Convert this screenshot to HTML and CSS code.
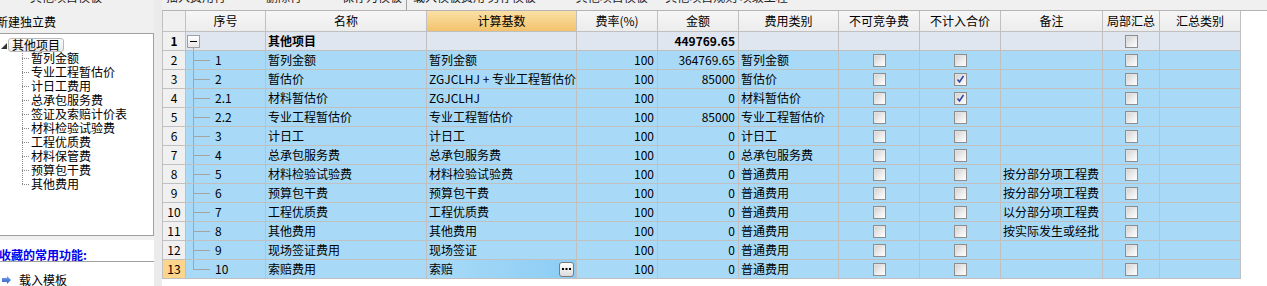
FILE: index.html
```html
<!DOCTYPE html>
<html lang="zh-CN">
<head>
<meta charset="utf-8">
<title>其他项目</title>
<link rel="stylesheet" href="styles.css">
</head>
<body>
<div class="app">
  <aside class="side">
    <div class="side-top"><span class="clip">其他项目模板</span></div>
    <div class="side-title"><span>新建独立费</span></div>
    <div class="tree-box">
      <div class="tree-root">
        <svg class="tri" width="6" height="6" viewBox="0 0 6 6"><polygon points="6,0 6,6 0,6" fill="#333"/></svg>
        <span class="root-label">其他项目</span>
      </div>
      <ul class="tree-children">
        <li><span class="dash"></span>暂列金额</li>
        <li><span class="dash"></span>专业工程暂估价</li>
        <li><span class="dash"></span>计日工费用</li>
        <li><span class="dash"></span>总承包服务费</li>
        <li><span class="dash"></span>签证及索赔计价表</li>
        <li><span class="dash"></span>材料检验试验费</li>
        <li><span class="dash"></span>工程优质费</li>
        <li><span class="dash"></span>材料保管费</li>
        <li><span class="dash"></span>预算包干费</li>
        <li class="last"><span class="dash"></span>其他费用</li>
      </ul>
    </div>
    <div class="fav">
      <div class="fav-title">收藏的常用功能:</div>
      <div class="fav-item">
        <svg class="arrow" width="10" height="8" viewBox="0 0 10 8"><defs><linearGradient id="ag" x1="0" y1="0" x2="0" y2="1"><stop offset="0" stop-color="#7aa6ee"/><stop offset="1" stop-color="#2c5cc4"/></linearGradient></defs><polygon points="0,2 5,2 5,0 9,4 5,8 5,6 0,6" fill="url(#ag)"/></svg>
        <span>载入模板</span>
      </div>
    </div>
  </aside>
  <div class="splitter"></div>
  <main class="main">
    <div class="toolbar">
      <span class="tb tb-a">插入费用行</span>
      <span class="tb tb-b">删除行</span>
      <span class="tb tb-c">保存为模板</span>
      <span class="sep"></span>
      <span class="tb tb-d">载入模板费用 另存模板</span>
      <span class="tb tb-e">其他项目模板 · 其他项目规则 项级工程</span>
    </div>
    <div class="grid-wrap">
      <div class="grid">
        <div class="row head">
          <div class="c rn"></div>
          <div class="c hc">序号</div>
          <div class="c hc">名称</div>
          <div class="c hc sel">计算基数</div>
          <div class="c hc">费率(%)</div>
          <div class="c hc">金额</div>
          <div class="c hc">费用类别</div>
          <div class="c hc">不可竞争费</div>
          <div class="c hc">不计入合价</div>
          <div class="c hc">备注</div>
          <div class="c hc">局部汇总</div>
          <div class="c hc">汇总类别</div>
        </div>

        <div class="row top">
          <div class="c rn b">1</div>
          <div class="c tr0"><span class="exp"><span class="minus"></span></span></div>
          <div class="c l b">其他项目</div>
          <div class="c l"></div>
          <div class="c r"></div>
          <div class="c r b">449769.65</div>
          <div class="c l"></div>
          <div class="c ctr"></div>
          <div class="c ctr"></div>
          <div class="c l"></div>
          <div class="c ctr"><span class="cb"></span></div>
          <div class="c l"></div>
        </div>

        <div class="row">
          <div class="c rn">2</div>
          <div class="c tr">1</div>
          <div class="c l">暂列金额</div>
          <div class="c l">暂列金额</div>
          <div class="c r">100</div>
          <div class="c r">364769.65</div>
          <div class="c l">暂列金额</div>
          <div class="c ctr"><span class="cb"></span></div>
          <div class="c ctr"><span class="cb"></span></div>
          <div class="c l"></div>
          <div class="c ctr"><span class="cb"></span></div>
          <div class="c l"></div>
        </div>

        <div class="row">
          <div class="c rn">3</div>
          <div class="c tr">2</div>
          <div class="c l">暂估价</div>
          <div class="c l">ZGJCLHJ + 专业工程暂估价</div>
          <div class="c r">100</div>
          <div class="c r">85000</div>
          <div class="c l">暂估价</div>
          <div class="c ctr"><span class="cb"></span></div>
          <div class="c ctr"><span class="cb on"><svg width="9" height="9" viewBox="0 0 9 9"><path d="M1.5 4.5 L3.5 7 L7.5 1" fill="none" stroke="#3348a8" stroke-width="1.6"/></svg></span></div>
          <div class="c l"></div>
          <div class="c ctr"><span class="cb"></span></div>
          <div class="c l"></div>
        </div>

        <div class="row">
          <div class="c rn">4</div>
          <div class="c tr">2.1</div>
          <div class="c l">材料暂估价</div>
          <div class="c l">ZGJCLHJ</div>
          <div class="c r">100</div>
          <div class="c r">0</div>
          <div class="c l">材料暂估价</div>
          <div class="c ctr"><span class="cb"></span></div>
          <div class="c ctr"><span class="cb on"><svg width="9" height="9" viewBox="0 0 9 9"><path d="M1.5 4.5 L3.5 7 L7.5 1" fill="none" stroke="#3348a8" stroke-width="1.6"/></svg></span></div>
          <div class="c l"></div>
          <div class="c ctr"><span class="cb"></span></div>
          <div class="c l"></div>
        </div>

        <div class="row">
          <div class="c rn">5</div>
          <div class="c tr">2.2</div>
          <div class="c l">专业工程暂估价</div>
          <div class="c l">专业工程暂估价</div>
          <div class="c r">100</div>
          <div class="c r">85000</div>
          <div class="c l">专业工程暂估价</div>
          <div class="c ctr"><span class="cb"></span></div>
          <div class="c ctr"><span class="cb"></span></div>
          <div class="c l"></div>
          <div class="c ctr"><span class="cb"></span></div>
          <div class="c l"></div>
        </div>

        <div class="row">
          <div class="c rn">6</div>
          <div class="c tr">3</div>
          <div class="c l">计日工</div>
          <div class="c l">计日工</div>
          <div class="c r">100</div>
          <div class="c r">0</div>
          <div class="c l">计日工</div>
          <div class="c ctr"><span class="cb"></span></div>
          <div class="c ctr"><span class="cb"></span></div>
          <div class="c l"></div>
          <div class="c ctr"><span class="cb"></span></div>
          <div class="c l"></div>
        </div>

        <div class="row">
          <div class="c rn">7</div>
          <div class="c tr">4</div>
          <div class="c l">总承包服务费</div>
          <div class="c l">总承包服务费</div>
          <div class="c r">100</div>
          <div class="c r">0</div>
          <div class="c l">总承包服务费</div>
          <div class="c ctr"><span class="cb"></span></div>
          <div class="c ctr"><span class="cb"></span></div>
          <div class="c l"></div>
          <div class="c ctr"><span class="cb"></span></div>
          <div class="c l"></div>
        </div>

        <div class="row">
          <div class="c rn">8</div>
          <div class="c tr">5</div>
          <div class="c l">材料检验试验费</div>
          <div class="c l">材料检验试验费</div>
          <div class="c r">100</div>
          <div class="c r">0</div>
          <div class="c l">普通费用</div>
          <div class="c ctr"><span class="cb"></span></div>
          <div class="c ctr"><span class="cb"></span></div>
          <div class="c l">按分部分项工程费</div>
          <div class="c ctr"><span class="cb"></span></div>
          <div class="c l"></div>
        </div>

        <div class="row">
          <div class="c rn">9</div>
          <div class="c tr">6</div>
          <div class="c l">预算包干费</div>
          <div class="c l">预算包干费</div>
          <div class="c r">100</div>
          <div class="c r">0</div>
          <div class="c l">普通费用</div>
          <div class="c ctr"><span class="cb"></span></div>
          <div class="c ctr"><span class="cb"></span></div>
          <div class="c l">按分部分项工程费</div>
          <div class="c ctr"><span class="cb"></span></div>
          <div class="c l"></div>
        </div>

        <div class="row">
          <div class="c rn">10</div>
          <div class="c tr">7</div>
          <div class="c l">工程优质费</div>
          <div class="c l">工程优质费</div>
          <div class="c r">100</div>
          <div class="c r">0</div>
          <div class="c l">普通费用</div>
          <div class="c ctr"><span class="cb"></span></div>
          <div class="c ctr"><span class="cb"></span></div>
          <div class="c l">以分部分项工程费</div>
          <div class="c ctr"><span class="cb"></span></div>
          <div class="c l"></div>
        </div>

        <div class="row">
          <div class="c rn">11</div>
          <div class="c tr">8</div>
          <div class="c l">其他费用</div>
          <div class="c l">其他费用</div>
          <div class="c r">100</div>
          <div class="c r">0</div>
          <div class="c l">普通费用</div>
          <div class="c ctr"><span class="cb"></span></div>
          <div class="c ctr"><span class="cb"></span></div>
          <div class="c l">按实际发生或经批</div>
          <div class="c ctr"><span class="cb"></span></div>
          <div class="c l"></div>
        </div>

        <div class="row">
          <div class="c rn">12</div>
          <div class="c tr">9</div>
          <div class="c l">现场签证费用</div>
          <div class="c l">现场签证</div>
          <div class="c r">100</div>
          <div class="c r">0</div>
          <div class="c l">普通费用</div>
          <div class="c ctr"><span class="cb"></span></div>
          <div class="c ctr"><span class="cb"></span></div>
          <div class="c l"></div>
          <div class="c ctr"><span class="cb"></span></div>
          <div class="c l"></div>
        </div>

        <div class="row">
          <div class="c rn cur">13</div>
          <div class="c tr end">10</div>
          <div class="c l">索赔费用</div>
          <div class="c l edit"><span>索赔</span><span class="more"><svg width="9" height="3" viewBox="0 0 9 3"><rect x="0" y="0" width="2" height="2" fill="#000"/><rect x="3.5" y="0" width="2" height="2" fill="#000"/><rect x="7" y="0" width="2" height="2" fill="#000"/></svg></span></div>
          <div class="c r">100</div>
          <div class="c r">0</div>
          <div class="c l">普通费用</div>
          <div class="c ctr"><span class="cb"></span></div>
          <div class="c ctr"><span class="cb"></span></div>
          <div class="c l"></div>
          <div class="c ctr"><span class="cb"></span></div>
          <div class="c l"></div>
        </div>
      </div>
    </div>
  </main>
</div>
</body>
</html>
```

FILE: styles.css
```css
* { box-sizing: border-box; }

html, body {
  margin: 0;
  padding: 0;
}

body {
  width: 1267px;
  height: 286px;
  overflow: hidden;
  background: #f0f0f0;
  font-family: "Noto Sans CJK SC", "Noto Sans", sans-serif;
  font-size: 12px;
  color: #000;
}

.app {
  display: flex;
  height: 286px;
}

/* ---------- left panel ---------- */
.side {
  width: 154px;
  flex: none;
  display: flex;
  flex-direction: column;
  background: #f0f0f0;
}

.side-top {
  height: 10px;
  overflow: hidden;
  padding-left: 30px;
}

.clip {
  display: block;
  line-height: 12px;
  margin-top: -9px;
  color: #222;
}

.side-title {
  height: 23px;
  line-height: 23px;
  overflow: hidden;
  white-space: nowrap;
}

.side-title span {
  display: inline-block;
  margin-left: -4px;
}

.tree-box {
  height: 203px;
  margin-left: -1px;
  width: 155px;
  background: #fff;
  border: 1px solid #a0a0a0;
  padding-top: 4px;
}

.tree-root {
  display: flex;
  align-items: center;
  height: 13px;
}

.tri {
  margin-left: 1px;
  margin-top: 2px;
  flex: none;
}

.root-label {
  margin-left: 1px;
  height: 14px;
  line-height: 12px;
  padding: 0 3px;
  border: 1px solid #b8b8b8;
  border-radius: 3px;
  background: linear-gradient(#fbfbfb, #e9e9e9);
}

.tree-children {
  list-style: none;
  margin: 0 0 0 22px;
  padding: 0;
}

.tree-children li {
  height: 14px;
  line-height: 14px;
  display: flex;
  align-items: center;
  white-space: nowrap;
  background-image: linear-gradient(#888 50%, transparent 50%);
  background-size: 1px 2px;
  background-repeat: repeat-y;
  background-position: 0 0;
}

.tree-children li.last {
  background-image: linear-gradient(#fff, #fff), linear-gradient(#888 50%, transparent 50%);
  background-size: 1px 7px, 1px 2px;
  background-repeat: no-repeat, repeat-y;
  background-position: 0 100%, 0 0;
}

.dash {
  width: 7px;
  height: 1px;
  margin-right: 2px;
  flex: none;
  background: repeating-linear-gradient(to right, #888 0 1px, transparent 1px 2px);
}

.fav {
  margin-top: 4px;
  flex: 1;
  background: #fff;
}

.fav-title {
  height: 22px;
  padding-top: 8px;
  line-height: 13px;
  color: #0000ee;
  font-weight: bold;
  border-bottom: 1px solid #a0a0a0;
  white-space: nowrap;
  margin-left: -1px;
}

.fav-item {
  display: flex;
  align-items: center;
  height: 24px;
  padding-top: 12px;
  padding-left: 2px;
  line-height: 14px;
}

.arrow {
  flex: none;
  margin-right: 7px;
}

.splitter {
  width: 8px;
  flex: none;
  background: #ebebeb;
}

/* ---------- main ---------- */
.main {
  flex: 1;
  display: flex;
  flex-direction: column;
  min-width: 0;
}

.toolbar {
  height: 10px;
  overflow: hidden;
  display: flex;
  align-items: flex-start;
  background: #f0f0f0;
  white-space: nowrap;
}

.tb {
  display: block;
  line-height: 12px;
  margin-top: -9px;
  color: #222;
}

.tb-a { margin-left: 4px; }
.tb-b { margin-left: 40px; }
.tb-c { margin-left: 40px; }
.tb-d { margin-left: 6px; }
.tb-e { margin-left: 40px; }

.sep {
  width: 1px;
  height: 10px;
  margin-left: 4px;
  background: #a0a0a0;
}

.grid-wrap {
  flex: 1;
  background: #fff;
  border-top: 1px solid #b4b4b4;
}

.grid {
  width: 1079px;
  border-left: 1px solid #c0c0c0;
}

.row {
  display: grid;
  grid-template-columns: 23px 80px 161px 150px 81px 81px 100px 81px 81px 102px 57px 81px;
  height: 19px;
  background: #a8daf8;
}

.row.head {
  height: 21px;
  background: #f0f0f0;
}

.row.top {
  background: #dfe6f0;
}

.c {
  border-right: 1px solid #c0c0c0;
  border-bottom: 1px solid #c0c0c0;
  white-space: nowrap;
  overflow: hidden;
  display: flex;
  align-items: center;
  line-height: 18px;
}

.hc {
  justify-content: center;
  background: linear-gradient(#f6f6f6, #ececec);
}

.hc.sel {
  background: linear-gradient(#fbe0a6, #f2c36c);
}

.rn {
  justify-content: center;
  background: #f0f0f0;
}

.rn.cur {
  background: #fdd48c;
}

.b { font-weight: bold; }

.l { padding-left: 2px; }

.r {
  justify-content: flex-end;
  padding-right: 3px;
}

.ctr { justify-content: center; }

/* tree column */
.tr {
  padding-left: 29px;
  background-image: linear-gradient(#a4a4a4, #a4a4a4), linear-gradient(#a4a4a4, #a4a4a4);
  background-repeat: no-repeat;
  background-position: 7px 0, 7px 9px;
  background-size: 1px 100%, 17px 1px;
}

.tr.end {
  background-size: 1px 10px, 17px 1px;
}

.tr0 {
  align-items: flex-start;
  background-image: linear-gradient(#a4a4a4, #a4a4a4);
  background-repeat: no-repeat;
  background-position: 7px 15px;
  background-size: 1px 4px;
}

.exp {
  width: 13px;
  height: 13px;
  margin: 3px 0 0 1px;
  border: 1px solid #a0a0a0;
  background: linear-gradient(#ffffff, #e6e6e6);
  display: flex;
  align-items: center;
  justify-content: center;
}

.minus {
  width: 7px;
  height: 1px;
  background: #000;
}

/* checkbox */
.cb {
  width: 13px;
  height: 13px;
  border: 1px solid #8e8e8e;
  background: linear-gradient(135deg, #cfcfcf 0%, #ececec 55%, #ffffff 100%);
  box-shadow: inset 1px 1px 0 #e2e2e2;
  display: flex;
  align-items: center;
  justify-content: center;
}

/* editing cell */
.edit {
  justify-content: space-between;
  padding-right: 2px;
  background: linear-gradient(to right, #a8daf8, #8ccdf4);
}

.more {
  width: 15px;
  height: 15px;
  border: 1px solid #7c7c7c;
  border-radius: 3px;
  background: linear-gradient(#ffffff, #dcdcdc);
  display: flex;
  align-items: center;
  justify-content: center;
}
```
